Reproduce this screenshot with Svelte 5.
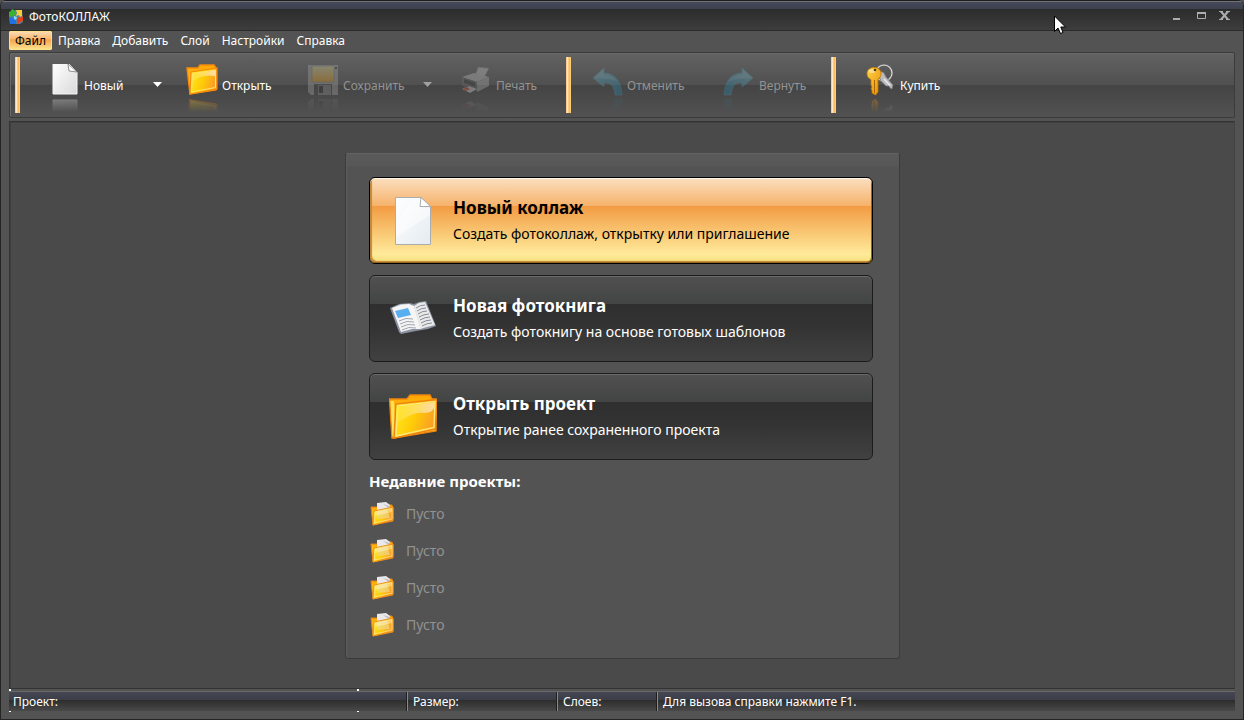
<script lang="ts">
	type Tool = { id: string; label: string; disabled?: boolean; drop?: boolean };

	const menu = ['Файл', 'Правка', 'Добавить', 'Слой', 'Настройки', 'Справка'];

	const fileTools: Tool[] = [
		{ id: 'page', label: 'Новый', drop: true },
		{ id: 'folder', label: 'Открыть' },
		{ id: 'disk', label: 'Сохранить', disabled: true, drop: true },
		{ id: 'printer', label: 'Печать', disabled: true }
	];
	const editTools: Tool[] = [
		{ id: 'undo', label: 'Отменить', disabled: true },
		{ id: 'redo', label: 'Вернуть', disabled: true }
	];
	const buyTools: Tool[] = [{ id: 'keys', label: 'Купить' }];

	const actions = [
		{ id: 'sheet', title: 'Новый коллаж', text: 'Создать фотоколлаж, открытку или приглашение' },
		{ id: 'book', title: 'Новая фотокнига', text: 'Создать фотокнигу на основе готовых шаблонов' },
		{ id: 'bigfolder', title: 'Открыть проект', text: 'Открытие ранее сохраненного проекта' }
	];

	const recent = ['Пусто', 'Пусто', 'Пусто', 'Пусто'];

	let active = $state(0);
	let openMenu = $state(0);
</script>

<!-- Gradients shared by all icons -->
<svg class="defs" aria-hidden="true">
	<defs>
		<linearGradient id="g-paper" x1="0" y1="0" x2="1" y2="1">
			<stop offset="0" stop-color="#ffffff" />
			<stop offset="1" stop-color="#d9d9d9" />
		</linearGradient>
		<linearGradient id="g-sheet" x1="0" y1="0" x2="1" y2="1">
			<stop offset="0" stop-color="#ffffff" />
			<stop offset="1" stop-color="#e4ebf1" />
		</linearGradient>
		<linearGradient id="g-folder" x1="0" y1="0.3" x2="1" y2="0.6">
			<stop offset="0" stop-color="#ffe81c" />
			<stop offset="0.5" stop-color="#ffca08" />
			<stop offset="1" stop-color="#f9962a" />
		</linearGradient>
		<linearGradient id="g-back" x1="0" y1="0" x2="0" y2="1">
			<stop offset="0" stop-color="#ffa800" />
			<stop offset="1" stop-color="#ffcf40" />
		</linearGradient>
		<linearGradient id="g-shine" x1="0" y1="0" x2="1" y2="0">
			<stop offset="0" stop-color="#fff" stop-opacity="0.1" />
			<stop offset="1" stop-color="#fff" stop-opacity="0.6" />
		</linearGradient>
		<linearGradient id="g-label" x1="0" y1="0" x2="0" y2="1">
			<stop offset="0" stop-color="#d9d6a0" />
			<stop offset="1" stop-color="#f0a010" />
		</linearGradient>
		<linearGradient id="g-arrow" x1="0" y1="0" x2="1" y2="1">
			<stop offset="0" stop-color="#6fb4c8" />
			<stop offset="1" stop-color="#1a82a8" />
		</linearGradient>
		<linearGradient id="g-key" x1="0" y1="0" x2="1" y2="1">
			<stop offset="0" stop-color="#ffd34a" />
			<stop offset="1" stop-color="#e88f00" />
		</linearGradient>
	</defs>
</svg>

{#snippet icon(id: string)}
	{#if id === 'page'}
		<svg viewBox="0 0 32 32">
			<path d="M5 0H21L29 8V30H5Z" fill="url(#g-paper)" stroke="#f6f6f6" />
			<path d="M20 0L29 8L21 7Z" fill="#fff" stroke="#777" stroke-width="0.8" />
		</svg>
	{:else if id === 'folder'}
		<svg viewBox="0 0 32 32">
			<path d="M1 4H12L14 1H28L30 4V26L4 30Z" fill="url(#g-back)" stroke="#f58a0c" stroke-width="1.4" />
			<path d="M5 8L31 4V25L4 30Z" fill="url(#g-folder)" stroke="#f58a0c" stroke-width="1.2" />
			<path d="M6.500 9.500L29.500 6V23.500L5.500 28Z" fill="none" stroke="#ffe566" stroke-width="1" />
			<path d="M6 18Q15 10 29 12V6.500L6.500 10Z" fill="url(#g-shine)" />
		</svg>
	{:else if id === 'disk'}
		<svg viewBox="0 0 32 32">
			<path d="M1 1H31V31H4L1 28Z" fill="#a6a6a6" />
			<path d="M5 2H27V18H5Z" fill="url(#g-label)" stroke="#777" stroke-width="0.6" />
			<path d="M7 20H25V31H7Z" fill="#474747" />
			<path d="M11 21H24V31H11Z" fill="#8d8d8d" />
			<path d="M12 22H16V29H12ZM28 3H30V5H28Z" fill="#333" />
		</svg>
	{:else if id === 'printer'}
		<svg viewBox="0 0 32 32">
			<path d="M14 14L18 3L29 4L24 14Z" fill="#aaa" />
			<path d="M15 14L19 4L28 5L23 14Z" fill="#c6c6c6" />
			<path d="M2 13L14 9L29 13L17 18Z" fill="#c2c2c2" />
			<path d="M2 13L17 18V27L2 22Z" fill="#6a6a6a" />
			<path d="M17 18L29 13V22L17 28Z" fill="#b0b0b0" />
			<path d="M4 15L15 18.500V22L4 19Z" fill="#333" />
			<path d="M2 25L9 22L17 25L10 29Z" fill="#e0e0e0" />
			<path d="M3 25L7 23L10 25L6 27Z" fill="#e45636" />
		</svg>
	{:else if id === 'undo' || id === 'redo'}
		<svg viewBox="0 0 32 32" class:mirror={id === 'redo'}>
			<path d="M2 14L13 4V9C24 9 30 17 31 31H24C23 22 20 18 13 19V23Z" fill="url(#g-arrow)" stroke="#59a3b8" stroke-width="0.6" />
			<path d="M3 14L12 6V10C20 11 24 13 27 18C20 14 12 15 3 14Z" fill="#fff" opacity="0.2" />
		</svg>
	{:else if id === 'keys'}
		<svg viewBox="0 0 32 32">
			<circle cx="20" cy="9" r="8" fill="none" stroke="#6d6d6d" stroke-width="2.200" />
			<circle cx="20" cy="9" r="8" fill="none" stroke="#dedede" stroke-width="1.100" />
			<path d="M14 10Q16 6 20 9L22 13L29 21L28 25L26 24L25 22L22 22L17 17Z" fill="#b9bbc0" stroke="#777" stroke-width="0.8" />
			<path d="M20 15L26 21.500" stroke="#eee" stroke-width="1.200" />
			<path d="M10 3.500C14 3.500 17 6 17 9.500C17 12 16 14 14 15.500V28L11.500 31L8 29V26L7 25L8 23L7 21V15.500C4 14.500 3 12 3 9.500C3 6 6 3.500 10 3.500Z" fill="url(#g-key)" stroke="#c77700" stroke-width="0.8" />
			<ellipse cx="8" cy="7" rx="3.500" ry="2" fill="#fff" opacity="0.4" />
			<circle cx="11" cy="6" r="1.300" fill="#4b3a1b" />
			<path d="M10.500 16V29" stroke="#a86500" stroke-width="1" />
		</svg>
	{:else if id === 'sheet'}
		<svg viewBox="0 0 48 48">
			<path d="M6.500 0.500H32L41.500 9.500V47.500H6.500Z" fill="url(#g-sheet)" stroke="#a9adb1" />
			<path d="M7 26L25 1H31V10L41 11V18L7 40Z" fill="#fff" opacity="0.45" />
			<path d="M32 0.500L31 9.500H41.500Z" fill="#fff" stroke="#a9adb1" />
		</svg>
	{:else if id === 'book'}
		<svg viewBox="0 0 48 48">
			<path d="M1 13L10 9L20 8L25 9L30 7L37 6L47 31L39 34L27 36L12 39L10 37Z" fill="#8b93a3" />
			<path d="M3 13L12 9.500L20 9L25 11L32 34L23 34L12 37Z" fill="#f5f5f5" />
			<path d="M25 11L30 8L36 7L46 30L38 32L31 34Z" fill="#e9e9e9" />
			<path d="M6 16L19 13L22 20L9 23Z" fill="#59aef0" />
			<path d="M10 26Q17 22 24 24M11 29Q18 25 25 27M12 32Q19 28 26 30M13 35Q20 31 27 33" stroke="#a0a5b0" fill="none" />
			<path d="M27 13Q31 10 36 10M28 16Q32 13 37 13M29 19Q33 16 38 16M30 22Q35 19 40 19M31 25Q36 22 41 22M32 28Q37 25 42 25M33 31Q38 28 43 28" stroke="#858b98" fill="none" />
		</svg>
	{:else if id === 'bigfolder'}
		<svg viewBox="0 0 48 48">
			<path d="M0.500 6H18L21 2H41L43 6H47V38L5 45H3Z" fill="url(#g-back)" stroke="#ef850e" stroke-width="1.400" />
			<path d="M1.500 8H5L6 43L3.500 43Z" fill="#ffe35c" />
			<path d="M7 11L48 6.500L46.500 36L5 45Z" fill="url(#g-folder)" stroke="#ef850e" stroke-width="1.500" />
			<path d="M8.500 13L46 8.500L45 34.500L7 43Z" fill="none" stroke="#ffe875" stroke-width="1.400" />
			<path d="M9 29C20 23 26 19 34 20C40 20 44 18 45 15V9.500L9 14Z" fill="url(#g-shine)" />
		</svg>
	{:else if id === 'filled'}
		<svg viewBox="0 0 24 24">
			<path d="M1 5H8L9 3H22L23 6V19L3 23Z" fill="url(#g-back)" stroke="#e58415" />
			<path d="M7 1L16 0L20 3V14H7Z" fill="#e9e9ec" />
			<path d="M13 2L20 4V7Z" fill="#bfc0c7" />
			<path d="M4 9L23 5V18L3 23Z" fill="url(#g-folder)" stroke="#ee9220" />
			<path d="M7 9L17 7L20 16L7 17Z" fill="#e9dcae" opacity="0.55" />
			<path d="M5 10L22 6.500V17L4.500 21Z" fill="none" stroke="#ffe38a" stroke-width="0.8" />
			<path d="M5 14L22 10V6.500L5 10Z" fill="#fff" opacity="0.35" />
		</svg>
	{/if}
{/snippet}

{#snippet toolButton(tool: Tool)}
	<div class="tool">
		<button class="tool-btn" disabled={tool.disabled}>
			<span class="tool-icon">
				<span class="glyph">{@render icon(tool.id)}</span>
				<span class="reflection"><span class="glyph flipped">{@render icon(tool.id)}</span></span>
			</span>
			<span class="tool-label">{tool.label}</span>
		</button>
		{#if tool.drop}
			<button class="drop" disabled={tool.disabled} aria-label={tool.label}>
				<svg viewBox="0 0 9 5"><path d="M0 0H9L4.500 5Z" fill="currentColor" /></svg>
			</button>
		{/if}
	</div>
{/snippet}

<div class="window">
	<header class="titlebar">
		<svg class="logo" viewBox="0 0 16 16">
			<path d="M4 1H14L15 13L12 15H2L1 4Z" fill="#5d7f96" />
			<path d="M1 3L3 2L4 0L6 1L6 2L8 3V6L6 6V8L4 7L1 8Z" fill="#35b52e" />
			<path d="M8 1H14V7L12 8L11 6L8 7L9 4Z" fill="#f9cf38" />
			<path d="M1 9L4 8L5 10L8 9V15L2 15Z" fill="#1e72e4" />
			<path d="M9 9L11 8L13 9L15 7V12L12 13L11 15L9 14Z" fill="#e8401f" />
			<path d="M6 7L9 8L8 11L6 10Z" fill="#7fdcf5" />
		</svg>
		<h1>ФотоКОЛЛАЖ</h1>
		<div class="controls">
			<button aria-label="Свернуть"><svg viewBox="0 0 11 11"><path d="M2 9H9" stroke-width="2" /></svg></button>
			<button aria-label="Развернуть"><svg viewBox="0 0 11 11"><path d="M2 3H11" stroke-width="2" /><path d="M2.500 3V8.500H10.500V3" /></svg></button>
			<button aria-label="Закрыть"><svg viewBox="0 0 11 11"><path d="M2 1.500L9 9.500M9 1.500L2 9.500" stroke-width="2" /><path d="M0 1.500H4M7 1.500H11M0 9.500H4M7 9.500H11" /></svg></button>
		</div>
	</header>

	<nav class="menubar">
		{#each menu as item, i}
			<button class="menu-item" class:open={openMenu === i} onclick={() => (openMenu = i)}>{item}</button>
		{/each}
	</nav>

	<div class="toolbar">
		<span class="sep"></span>
		<span></span>
		{#each fileTools as tool}
			{@render toolButton(tool)}
		{/each}
		<span class="sep"></span>
		{#each editTools as tool}
			{@render toolButton(tool)}
		{/each}
		<span class="sep"></span>
		{#each buyTools as tool}
			{@render toolButton(tool)}
		{/each}
	</div>

	<main class="workspace">
		<section class="panel">
			<div class="actions">
				{#each actions as action, i}
					<button class="action" class:active={active === i} onclick={() => (active = i)}>
						<span class="action-icon">{@render icon(action.id)}</span>
						<span class="action-text">
							<strong>{action.title}</strong>
							<span>{action.text}</span>
						</span>
					</button>
				{/each}
			</div>

			<h2>Недавние проекты:</h2>
			<ul class="recent">
				{#each recent as name}
					<li>
						<span class="recent-icon">{@render icon('filled')}</span>
						<span>{name}</span>
					</li>
				{/each}
			</ul>
		</section>
	</main>

	<footer class="statusbar">
		<span>Проект:</span>
		<span>Размер:</span>
		<span>Слоев:</span>
		<span>Для вызова справки нажмите F1.</span>
	</footer>

	<svg class="pointer" viewBox="0 0 12 19" aria-hidden="true">
		<path d="M0.500 1V16.500L4 13L6.500 18.500L9 17.500L6.800 12H11.500Z" fill="#fff" stroke="#000" />
	</svg>
</div>

<style>
	:global(body) {
		margin: 0;
		background: #535353;
	}

	.window {
		position: relative;
		box-sizing: border-box;
		min-height: 100vh;
		display: flex;
		flex-direction: column;
		padding: 0 8px 8px;
		border: 1px solid #262626;
		border-top: 0;
		border-radius: 6px 6px 0 0;
		background: #535353;
		color: #fff;
		font-family: Tahoma, 'Noto Sans', sans-serif;
		font-size: 12px;
		line-height: 16px;
		overflow: hidden;
	}

	.defs {
		position: absolute;
		width: 0;
		height: 0;
	}

	svg {
		display: block;
		width: 100%;
		height: 100%;
	}

	button {
		margin: 0;
		padding: 0;
		border: 0;
		background: none;
		color: inherit;
		font: inherit;
		text-align: left;
	}

	.titlebar {
		display: flex;
		align-items: center;
		gap: 5px;
		box-sizing: border-box;
		height: 31px;
		margin: 0 -8px;
		padding: 3px 13px 0 7px;
		border-top: 1px solid #1d1d1d;
		border-bottom: 1px solid #2a2a2a;
		background: linear-gradient(#70727a 0 1px, #464958 1px, #3d404d 8px, #2c2c2c 8px, #3d3d3d);
	}

	.logo {
		width: 16px;
		height: 16px;
	}

	h1 {
		margin: 0;
		font-size: 12px;
		font-weight: 400;
	}

	.controls {
		display: flex;
		gap: 13px;
		margin-left: auto;
		padding-bottom: 3px;
	}

	.controls button {
		width: 11px;
		height: 11px;
	}

	.controls svg {
		fill: none;
		stroke: #adadad;
	}

	.menubar {
		display: flex;
		height: 21px;
	}

	.menu-item {
		box-sizing: border-box;
		height: 19px;
		padding: 0 5px;
		border: 1px solid transparent;
		line-height: 17px;
	}

	.menu-item.open {
		border-color: #ffe08a;
		border-radius: 1px;
		background: linear-gradient(#fcd9ad, #f8b871 40%, #f5a34b 45%, #fce08b);
		color: #000;
	}

	.toolbar {
		display: grid;
		grid-template-columns: 5px 28px 138px 121px 153px 106px 25px 132px 108px 33px auto;
		justify-content: start;
		align-items: center;
		height: 64px;
		padding-left: 5px;
		border: 1px solid #3b3b3b;
		border-radius: 2px;
		background: linear-gradient(#626262, #505050 32px, #444 32px, #525252);
		box-shadow: inset 1px 1px #6a6a6a;
	}

	.sep {
		width: 5px;
		height: 56px;
		background: linear-gradient(90deg, #f3a64f, #fff2df 1px, #fbe0bc 2px, #ffb24d 3px, #ffd777);
	}

	.tool,
	.tool-btn {
		display: flex;
		align-items: center;
	}

	.tool-btn {
		gap: 4px;
	}

	.tool-icon {
		padding-top: 6px;
	}

	.tool-label {
		padding-top: 2px;
	}

	.glyph {
		display: block;
		width: 32px;
		height: 32px;
	}

	.reflection {
		display: block;
		height: 14px;
		margin-top: 2px;
		overflow: hidden;
		opacity: 0.35;
		mask-image: linear-gradient(#000, transparent);
	}

	.flipped {
		transform: scaleY(-1);
	}

	.mirror {
		transform: scaleX(-1);
	}

	.tool-btn:disabled {
		color: #939393;
	}

	.tool-btn:disabled .tool-icon {
		opacity: 0.35;
	}

	.drop {
		width: 9px;
		height: 5px;
		margin: 0 24px 2px auto;
	}

	.drop:disabled {
		color: #a0a0a0;
	}

	.tool:nth-child(5) .drop {
		margin-right: 28px;
	}

	.workspace {
		flex: 1;
		display: flex;
		justify-content: center;
		align-items: flex-start;
		margin-top: 3px;
		padding: 31px 0 28px 1px;
		border: 1px solid #333;
		border-right-color: #444;
		background: #4a4a4a;
		box-shadow: inset 1px 1px #404040;
	}

	.panel {
		box-sizing: border-box;
		width: 555px;
		padding: 23px 26px 15px 23px;
		border: 1px solid #3b3b3b;
		border-top-color: #626262;
		border-radius: 3px;
		background: linear-gradient(#5a5a5a, #575757 12px, #535353 13px);
		box-shadow: inset 1px 0 #5d5d5d;
	}

	.actions {
		display: grid;
		gap: 11px;
	}

	.action {
		display: flex;
		align-items: center;
		gap: 16px;
		box-sizing: border-box;
		height: 87px;
		padding: 0 19px;
		border: 1px solid #1c1c1c;
		border-radius: 6px;
		background: linear-gradient(#505050, #434544 28px, #2f2f2f 28px, #333 50px, #414141);
		box-shadow: inset 0 1px #6b6b6b;
		font-size: 14px;
		line-height: 20px;
	}

	.action.active {
		border-color: #000;
		background: linear-gradient(#fbdfc0, #f6b26a 28px, #f39b43 28px, #feea9a 76px, #f6df79);
		box-shadow:
			inset 0 1px #fff4e6,
			inset -1px -1px #9a651c,
			inset 2px -2px 1px #c08a38;
		color: #000;
	}

	.action-icon {
		width: 48px;
		height: 48px;
	}

	.action-text {
		display: grid;
		gap: 6px;
	}

	strong {
		font-size: 17px;
	}

	h2 {
		margin: 11px 0 4px;
		font-size: 15px;
		line-height: 20px;
	}

	.recent {
		margin: 0;
		padding: 0;
		list-style: none;
		font-size: 14px;
		color: #929292;
	}

	.recent li {
		display: flex;
		align-items: center;
		gap: 12px;
		height: 37px;
		padding-left: 1px;
	}

	.recent-icon {
		width: 24px;
		height: 24px;
	}

	.statusbar {
		position: relative;
		display: grid;
		grid-template-columns: 398px 150px 100px 1fr;
		margin-top: 2px;
		border-top: 1px solid #696969;
		background: linear-gradient(#444753, #3b3d47 8px, #2d2d2d 8px, #494949);
	}

	.statusbar span {
		padding: 2px 4px 1px;
	}

	.statusbar span + span {
		padding-left: 5px;
		border-left: 1px solid #8a8a8a;
		box-shadow: -1px 0 #1e1e1e;
	}

	/* corner marks of the first status cell */
	.statusbar::before {
		content: '';
		position: absolute;
		top: -3px;
		left: 0;
		width: 350px;
		height: 23px;
		background:
			linear-gradient(#fff, #fff) 0 0 / 2px 2px no-repeat,
			linear-gradient(#fff, #fff) 100% 0 / 2px 2px no-repeat,
			linear-gradient(#fff, #fff) 0 100% / 2px 1px no-repeat,
			linear-gradient(#fff, #fff) 100% 100% / 2px 1px no-repeat;
	}

	.pointer {
		position: absolute;
		top: 15px;
		right: 177px;
		width: 12px;
		height: 19px;
	}
</style>
